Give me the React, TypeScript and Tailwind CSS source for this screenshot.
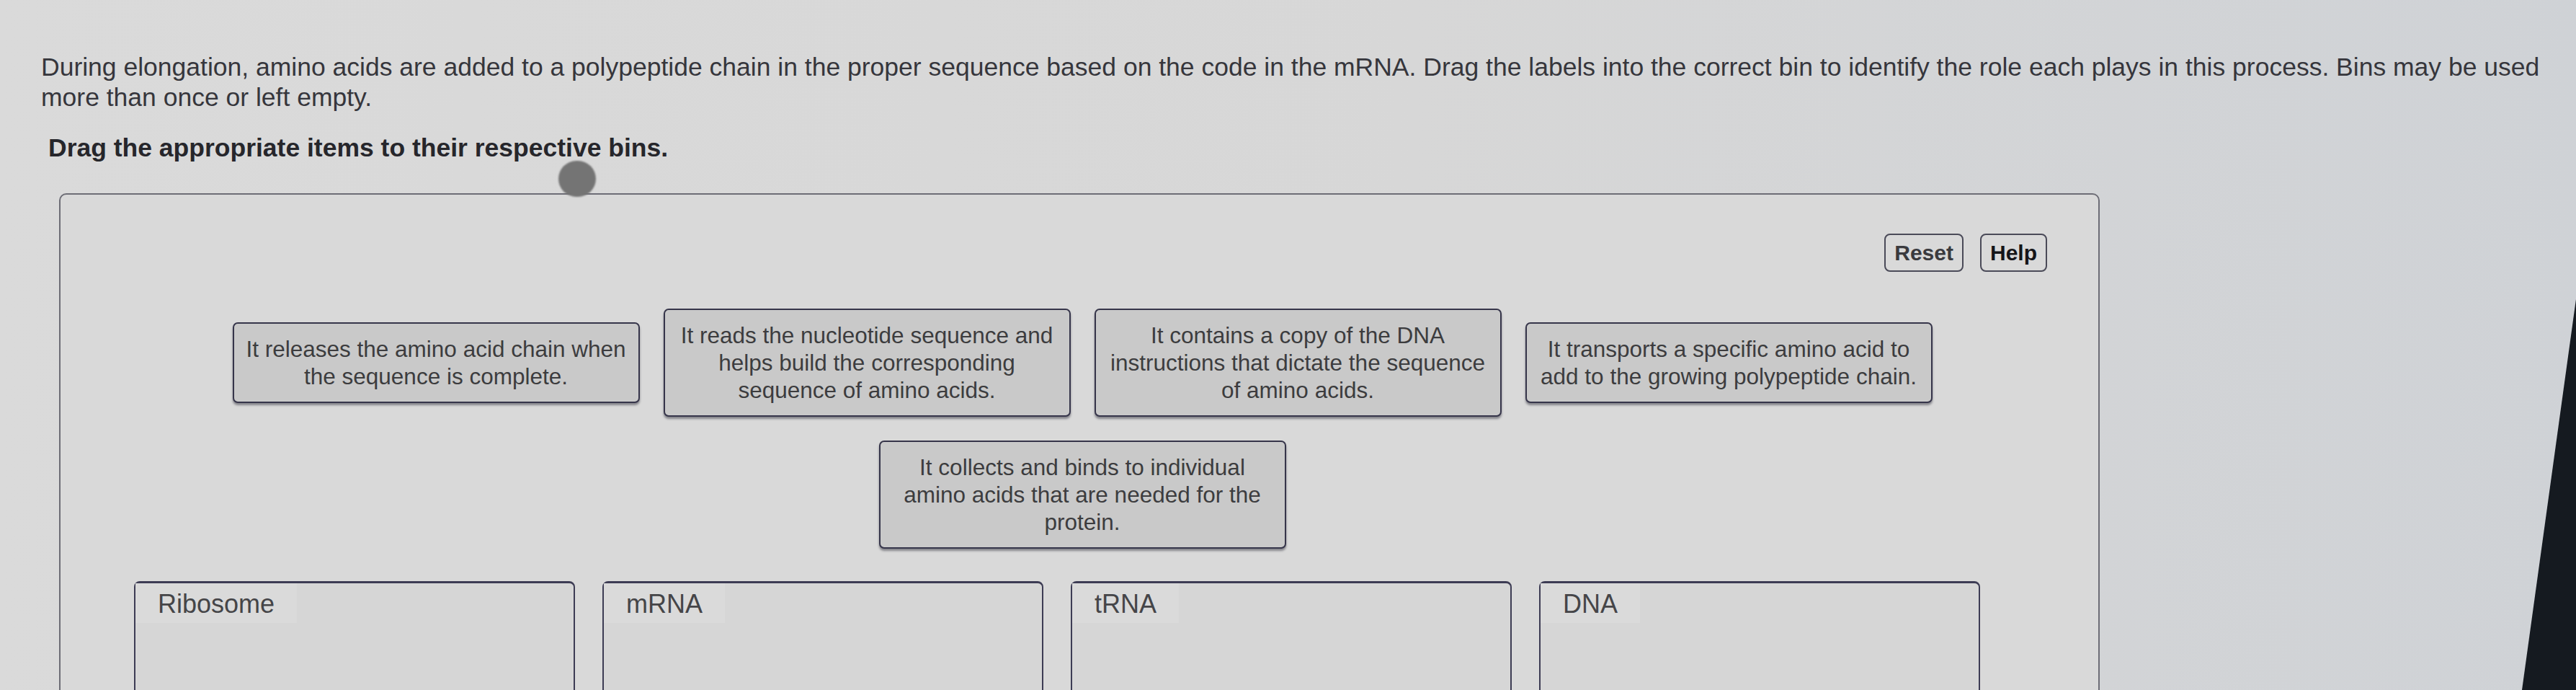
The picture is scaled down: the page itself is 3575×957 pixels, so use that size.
import React from "react";

const cards1 = [
  "It releases the amino acid chain when the sequence is complete.",
  "It reads the nucleotide sequence and helps build the corresponding sequence of amino acids.",
  "It contains a copy of the DNA instructions that dictate the sequence of amino acids.",
  "It transports a specific amino acid to add to the growing polypeptide chain.",
  "It collects and binds to individual amino acids that are needed for the protein.",
];

const bins = ["Ribosome", "mRNA", "tRNA", "DNA"];

function Card({ text }: { text: string }) {
  return (
    <div className="w-[565px] rounded-[7px] border-2 border-[#36354a] bg-[#c9c9c9] px-[15px] py-[16px] text-center text-[31.5px] leading-[38px] text-[#3c3c3e] shadow-[0_3px_3px_rgba(30,30,45,0.45)]">
      {text}
    </div>
  );
}

function Bin({ label }: { label: string }) {
  return (
    <div className="h-[220px] w-[612px] rounded-t-[8px] border-2 border-t-[3px] border-[#3d3c54] bg-[#d6d6d6]">
      <div className="inline-block bg-[#dadada] px-[31px] pb-[6px] pt-[8px] text-[36px] leading-[41px] text-[#454548]">
        {label}
      </div>
    </div>
  );
}

export default function App() {
  return (
    <div className="relative h-[957px] w-[3575px] overflow-hidden bg-[linear-gradient(90deg,#dadada,#d7d7d7_55%,#cfd2d6)] font-['Liberation_Sans',Arial,sans-serif]">
      <div className="pl-[57px] pt-[72px]">
        <p className="text-[35.5px] leading-[42px] text-[#36363c]">
          During elongation, amino acids are added to a polypeptide chain in the proper sequence based on the code in the mRNA. Drag the labels into the correct bin to identify the role each plays in this process. Bins may be used more than once or left empty.
        </p>
        <p className="mt-[26px] pl-[10px] text-[35.5px] font-bold leading-[46px] text-[#26262b]">
          Drag the appropriate items to their respective bins.
        </p>
      </div>

      <div className="ml-[82px] mt-[40px] h-[800px] w-[2832px] rounded-[10px] border-2 border-[#6d6d76] bg-[#d9d9d9]">
        <div className="flex justify-end gap-[23px] pr-[71px] pt-[54px]">
          <button className="rounded-[8px] border-2 border-[#4a4a58] px-[12px] py-[7px] text-[30px] font-bold leading-[35px] text-[#3a3a3e]">
            Reset
          </button>
          <button className="rounded-[8px] border-2 border-[#4a4a58] px-[12px] py-[7px] text-[30px] font-bold leading-[35px] text-[#151518]">
            Help
          </button>
        </div>

        <div className="mt-[51px] flex flex-wrap items-center justify-center gap-[33px] pl-[8px]">
          {cards1.map((t) => (
            <Card key={t} text={t} />
          ))}
        </div>

        <div className="mt-[45px] flex gap-[38px] pl-[102px]">
          {bins.map((b) => (
            <Bin key={b} label={b} />
          ))}
        </div>
      </div>

      <div className="absolute left-[775px] top-[223px] h-[50px] w-[52px] rounded-full bg-[#747474] blur-[1px]" />

      <svg className="absolute left-0 top-0" width="3575" height="957" viewBox="0 0 3575 957">
        <polygon points="3575,415 3500,957 3575,957" fill="#151a20" />
      </svg>
    </div>
  );
}
